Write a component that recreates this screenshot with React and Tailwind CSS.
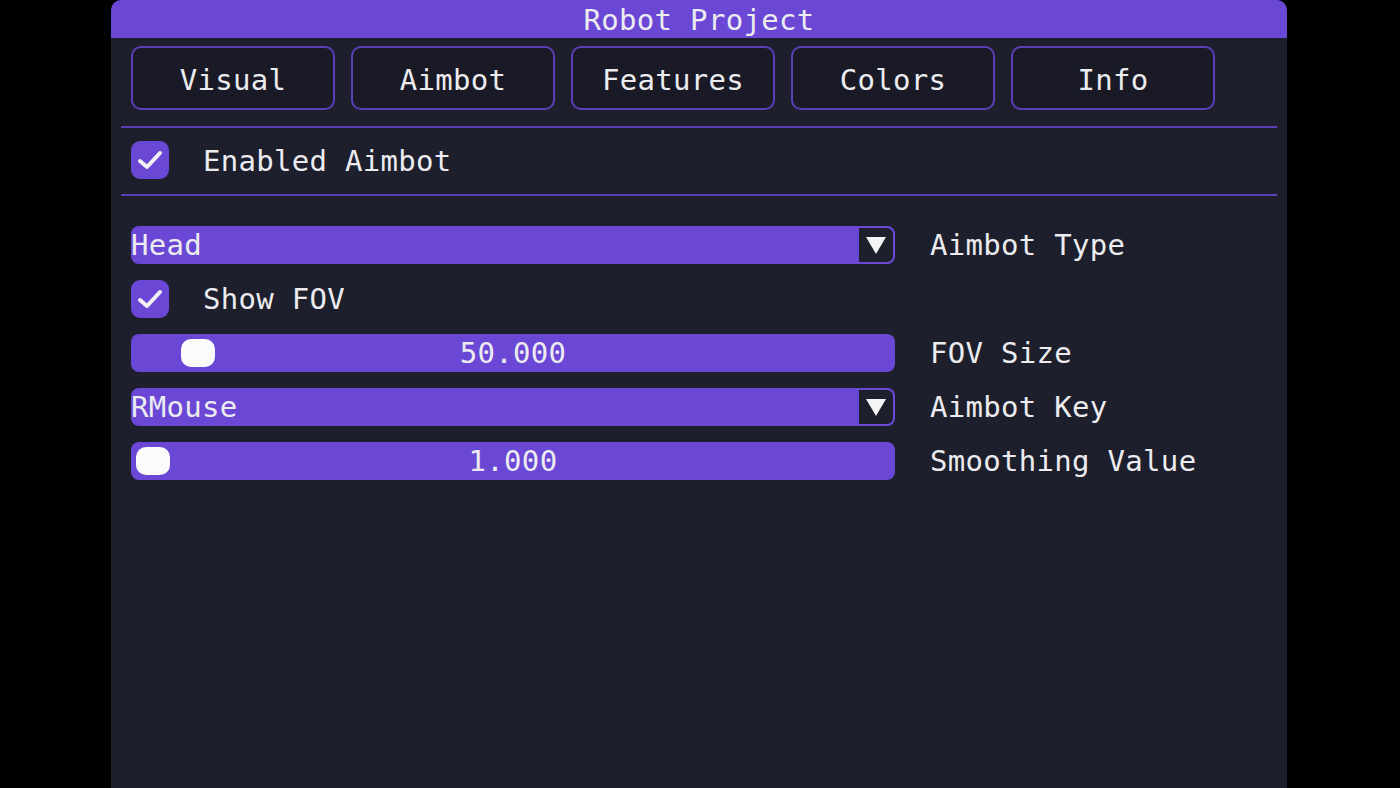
import React from "react";

const font = { fontFamily: '"DejaVu Sans Mono", "Liberation Mono", monospace' };

function Check() {
  return (
    <div className="w-[38px] h-[38px] rounded-[9px] bg-[#6b47d6] flex items-center justify-center shrink-0">
      <svg width="26" height="22" viewBox="0 0 26 22">
        <path d="M3 12 L10 18 L23 4" fill="none" stroke="#f2f2f2" strokeWidth="4" strokeLinecap="round" strokeLinejoin="round" />
      </svg>
    </div>
  );
}

function Combo({ value }) {
  return (
    <div className="w-[764px] h-[38px] rounded-[8px] bg-[#6b47d6] flex items-center overflow-hidden">
      <span className="flex-1 leading-none">{value}</span>
      <div className="w-[38px] h-[38px] bg-[#1d1f2c] border-2 border-[#6b47d6] rounded-r-[8px] flex items-center justify-center">
        <svg width="22" height="20" viewBox="0 0 22 20">
          <path d="M1 2 L21 2 L11 19 Z" fill="#f4f4f4" />
        </svg>
      </div>
    </div>
  );
}

function Slider({ value, grabLeft }) {
  return (
    <div className="relative w-[764px] h-[38px] rounded-[8px] bg-[#6b47d6] flex items-center justify-center">
      <div
        className="absolute top-[5px] w-[34px] h-[28px] rounded-[10px] bg-[#fbfbfb]"
        style={{ left: grabLeft }}
      />
      <span className="leading-none">{value}</span>
    </div>
  );
}

function Row({ children, label }) {
  return (
    <div className="flex items-center h-[38px]">
      {children}
      {label && <span className="ml-[35px] leading-none">{label}</span>}
    </div>
  );
}

export default function App() {
  const tabs = ["Visual", "Aimbot", "Features", "Colors", "Info"];
  return (
    <div className="w-[1400px] h-[788px] bg-black overflow-hidden" style={font}>
      <div className="ml-[111px] w-[1176px] h-[788px] bg-[#1d1f2c] rounded-t-[10px] overflow-hidden text-[29px] tracking-[0.3px] text-[#ececf0]">
        <div className="h-[38px] bg-[#6b47d6] flex items-center justify-center leading-none pt-[3px]">
          Robot Project
        </div>
        <div className="px-[20px] pt-[8px] flex gap-[16px]">
          {tabs.map((t) => (
            <div
              key={t}
              className="w-[204px] h-[64px] border-2 border-[#5c3fb8] rounded-[10px] bg-[#191a26] flex items-center justify-center leading-none pt-[4px]"
            >
              {t}
            </div>
          ))}
        </div>
        <div className="mx-[10px] mt-[16px] h-[2px] bg-[#5c3fb8]" />
        <div className="px-[20px] mt-[13px] flex items-center h-[38px]">
          <Check />
          <span className="ml-[34px] leading-none pt-[2px]">Enabled Aimbot</span>
        </div>
        <div className="mx-[10px] mt-[15px] h-[2px] bg-[#5c3fb8]" />
        <div className="px-[20px] mt-[30px] flex flex-col gap-[16px]">
          <Row label="Aimbot Type">
            <Combo value="Head" />
          </Row>
          <Row>
            <Check />
            <span className="ml-[34px] leading-none">Show FOV</span>
          </Row>
          <Row label="FOV Size">
            <Slider value="50.000" grabLeft={50} />
          </Row>
          <Row label="Aimbot Key">
            <Combo value="RMouse" />
          </Row>
          <Row label="Smoothing Value">
            <Slider value="1.000" grabLeft={5} />
          </Row>
        </div>
      </div>
    </div>
  );
}
